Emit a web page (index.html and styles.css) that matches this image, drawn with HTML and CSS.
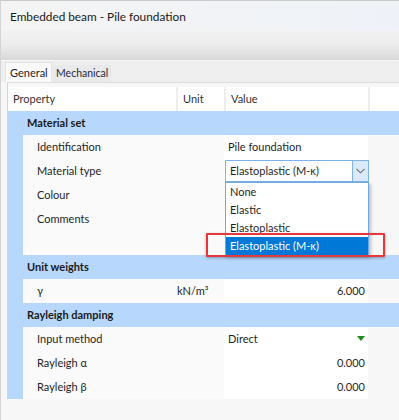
FILE: index.html
```html
<!DOCTYPE html>
<html lang="en">
<head>
    <meta charset="UTF-8">
    <meta name="viewport" content="width=device-width, initial-scale=1.0">
    <title>Embedded beam - Pile foundation</title>
    <link rel="stylesheet" href="styles.css">
</head>
<body>
    <div class="window">
        <div class="titlebar">Embedded beam - Pile foundation</div>
        <div class="toolbar"></div>
        <div class="tabs">
            <div class="tab active">General</div>
            <div class="tab">Mechanical</div>
        </div>
        <div class="panel">
            <!-- column headers -->
            <div class="head">
                <div class="hcell">Property</div>
                <div class="hcell sep">Unit</div>
                <div class="hcell sep">Value</div>
                <div class="hcell sep"></div>
            </div>

            <div class="group">Material set</div>
            <div class="row">
                <div class="gutter"></div>
                <div class="prop">Identification</div>
                <div class="unit"></div>
                <div class="val">Pile foundation</div>
                <div class="rest"></div>
            </div>
            <div class="row">
                <div class="gutter"></div>
                <div class="prop">Material type</div>
                <div class="unit"></div>
                <div class="val editor">
                    <div class="combo">
                        <span class="combo-text">Elastoplastic (M-κ)</span>
                        <span class="combo-btn">
                            <svg width="9" height="6" viewBox="0 0 9 6"><polyline points="0.5,0.8 4.5,4.8 8.5,0.8" fill="none" stroke="#6d6d6d" stroke-width="1.1"/></svg>
                        </span>
                        <div class="droplist">
                            <div class="item">None</div>
                            <div class="item">Elastic</div>
                            <div class="item">Elastoplastic</div>
                            <div class="item selected">Elastoplastic (M-κ)</div>
                        </div>
                    </div>
                </div>
                <div class="rest"></div>
            </div>
            <div class="row">
                <div class="gutter"></div>
                <div class="prop">Colour</div>
                <div class="unit"></div>
                <div class="val"></div>
                <div class="rest"></div>
            </div>
            <div class="row tall">
                <div class="gutter"></div>
                <div class="prop">Comments</div>
                <div class="unit"></div>
                <div class="val"></div>
                <div class="rest"></div>
            </div>

            <div class="group">Unit weights</div>
            <div class="row">
                <div class="gutter"></div>
                <div class="prop">γ</div>
                <div class="unit">kN/m³</div>
                <div class="val num">6.000</div>
                <div class="rest"></div>
            </div>

            <div class="group">Rayleigh damping</div>
            <div class="row">
                <div class="gutter"></div>
                <div class="prop">Input method</div>
                <div class="unit"></div>
                <div class="val pick">Direct<span class="tri"></span></div>
                <div class="rest"></div>
            </div>
            <div class="row">
                <div class="gutter"></div>
                <div class="prop">Rayleigh α</div>
                <div class="unit"></div>
                <div class="val num">0.000</div>
                <div class="rest"></div>
            </div>
            <div class="row">
                <div class="gutter"></div>
                <div class="prop">Rayleigh β</div>
                <div class="unit"></div>
                <div class="val num">0.000</div>
                <div class="rest"></div>
            </div>
        </div>

        <!-- highlight annotation -->
        <div class="marker"></div>
    </div>
</body>
</html>
```

FILE: styles.css
```css
body {
    margin: 0;
    padding: 0;
    width: 399px;
    height: 420px;
    overflow: hidden;
    background: #f7f7f7;
    font-family: Lato, 'Liberation Sans', sans-serif;
    font-size: 11px;
    color: #1f1f1f;
}
.window {
    position: relative;
    height: 420px;
    border-left: 1px solid #d4d4d4;
    box-sizing: border-box;
}
.titlebar {
    height: 30px;
    line-height: 31px;
    padding-left: 9px;
    font-size: 11.8px;
    color: #1a1a1a;
    background: linear-gradient(90deg, #f4f4f4 0%, #eef2f8 100%);
    border-top: 1px solid #cacaca;
    box-sizing: border-box;
}
.toolbar {
    height: 30px;
    background: linear-gradient(180deg, #f3f3f3 0%, #ececec 50%, #d8d8d8 100%);
    border-bottom: 1px solid #f6f6f6;
}
.tabs {
    height: 21px;
    background: #efefef;
    display: flex;
    align-items: flex-end;
    padding-left: 4px;
}
.tab {
    height: 17px;
    line-height: 17px;
    padding: 0 3px;
    font-size: 10.5px;
    background: #e9e9e9;
    color: #2a2a3a;
}
.tab.active {
    height: 20px;
    line-height: 19px;
    width: 47px;
    box-sizing: border-box;
    padding: 0 4px;
    font-size: 11px;
    background: #f9f9f9;
    border: 1px solid #e2e2e2;
    border-bottom: none;
    color: #1f1f1f;
    margin-right: 1px;
}
.panel {
    margin-left: 6px;
    border-left: 1px solid #d6d6d6;
    border-top: 1px solid #dcdcdc;
    padding-top: 4px;
    background: #f7f7f7;
}
.head {
    display: grid;
    grid-template-columns: 168px 48px 144px 1fr;
    height: 24px;
    line-height: 24px;
    background: #fff;
    color: #333;
}
.hcell {
    padding-left: 5px;
}
.hcell.sep {
    border-left: 2px solid #ededed;
    padding-left: 5px;
}
.group {
    height: 24px;
    line-height: 24px;
    background: #b7d8fc;
    font-weight: bold;
    padding-left: 19px;
    color: #1a1a1a;
}
.row {
    display: grid;
    grid-template-columns: 15px 153px 48px 144px 1fr;
    height: 24px;
    line-height: 24px;
}
.row.tall {
    height: 48px;
}
.gutter {
    background: #b7d8fc;
}
.prop {
    background: #fafafa;
    padding-left: 14px;
}
.unit {
    background: #fafafa;
    padding-left: 1px;
}
.val {
    background: #fff;
    padding: 0 3px 0 4px;
}
.val.num {
    text-align: right;
}
.val.pick {
    display: flex;
    justify-content: space-between;
    align-items: center;
}
.tri {
    width: 0;
    height: 0;
    border-left: 4px solid transparent;
    border-right: 4px solid transparent;
    border-top: 5px solid #1f8a1f;
    margin-top: -1px;
}
.rest {
    background: #f7f7f7;
}
.val.editor {
    padding: 0;
}
.combo {
    position: relative;
    margin: 1px 0 0 1px;
    width: 144px;
    height: 22px;
    box-sizing: border-box;
    border: 1px solid #7db3e8;
    background: #fff;
    display: flex;
    line-height: 20px;
}
.combo-text {
    flex: 1;
    padding-left: 4px;
}
.combo-btn {
    width: 15px;
    background: #dbeafb;
    border-left: 1px solid #7db3e8;
    display: flex;
    align-items: center;
    justify-content: center;
}
.droplist {
    position: absolute;
    top: 21px;
    left: -1px;
    width: 144px;
    box-sizing: border-box;
    border: 1px solid #6fa8e2;
    background: #fff;
    box-shadow: 2px 2px 3px rgba(0, 0, 0, 0.22);
    z-index: 2;
}
.item {
    height: 18px;
    line-height: 18px;
    padding-left: 4px;
}
.item.selected {
    background: #0078d7;
    color: #fff;
}
.marker {
    position: absolute;
    left: 205px;
    top: 233px;
    width: 179px;
    height: 24px;
    box-sizing: border-box;
    border: 2px solid #e5383d;
    border-radius: 1px;
    box-shadow: 0 1px 3px rgba(0, 0, 0, 0.3);
    z-index: 3;
}
```
